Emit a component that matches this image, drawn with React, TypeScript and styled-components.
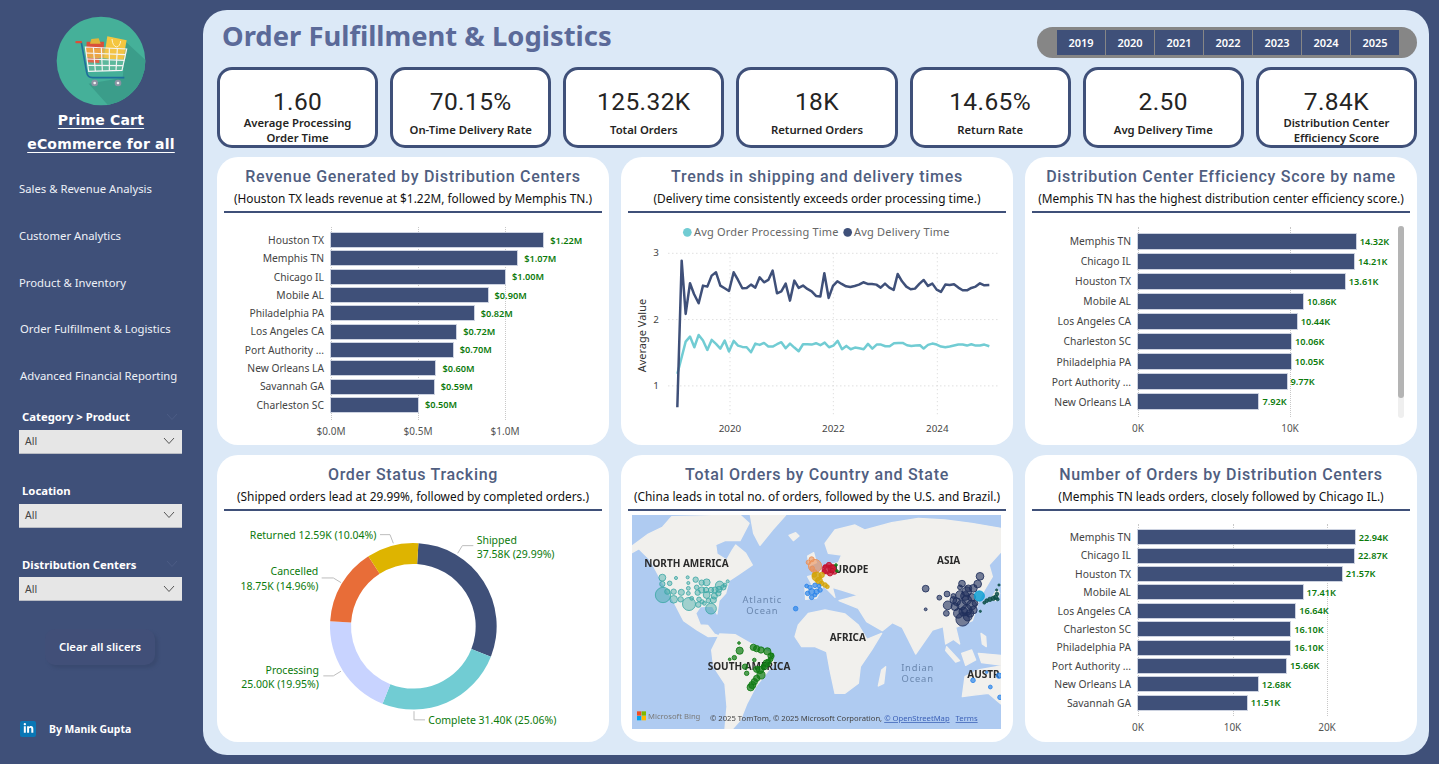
import React from "react";
import styled, { createGlobalStyle } from "styled-components";
import { FaLinkedinIn } from "react-icons/fa";

const NAVY = "#3f5079";
const BODY_FONT = `"Noto Sans", "Open Sans", sans-serif`;
const DIN_FONT = `Roboto, "Noto Sans", sans-serif`;

const GlobalStyle = createGlobalStyle`
  html, body {
    margin: 0;
    padding: 0;
    background: ${NAVY};
    overflow: hidden;
  }
  * {
    box-sizing: border-box;
  }
`;

const Page = styled.div`
  width: 1439px;
  height: 764px;
  display: flex;
  background: ${NAVY};
  font-family: ${BODY_FONT};
  overflow: hidden;
`;

/* sidebar */

const Sidebar = styled.aside`
  width: 203px;
  flex: none;
  padding: 16px 0 0 19px;
  display: flex;
  flex-direction: column;
  color: #fff;
`;

const LogoWrap = styled.div`
  width: 164px;
  display: flex;
  flex-direction: column;
  align-items: center;
`;

const BrandLine = styled.div`
  font-family: "DejaVu Sans", sans-serif;
  font-weight: 700;
  font-size: 14px;
  line-height: 24px;
  letter-spacing: 0.2px;
  color: #fff;
  text-decoration: underline;
  text-decoration-thickness: 1px;
  text-underline-offset: 3px;
  white-space: nowrap;
`;

const Brand = styled.div`
  margin-top: 2px;
  text-align: center;
`;

const NavList = styled.nav`
  margin-top: 9px;
  display: flex;
  flex-direction: column;
`;

const NavItem = styled.div<{ $indent?: number }>`
  height: 46.8px;
  line-height: 47px;
  font-size: 11.3px;
  color: #eef1f7;
  white-space: nowrap;
  padding-left: ${({ $indent }) => $indent ?? 0}px;
`;

const Slicer = styled.div`
  width: 163px;
  height: 73.6px;
  display: flex;
  flex-direction: column;
`;

const SlicerHead = styled.div`
  height: 26px;
  flex: none;
  padding: 0 3px;
  display: flex;
  align-items: center;
  justify-content: space-between;
  font-size: 11.3px;
  font-weight: 700;
  color: #fff;
`;

const SlicerBox = styled.div`
  height: 24px;
  flex: none;
  padding: 0 6px;
  background: #e6e6e6;
  border-bottom: 1px solid #b9bcc4;
  display: flex;
  align-items: center;
  justify-content: space-between;
  font-size: 10.5px;
  color: #444;
`;

const Slicers = styled.div`
  margin-top: 5px;
  display: flex;
  flex-direction: column;
`;

const ClearButton = styled.div`
  width: 110px;
  height: 36px;
  margin: 4px 0 0 26px;
  border-radius: 10px;
  background: #414f78;
  box-shadow: 3px 3px 3px #3a4a70;
  display: flex;
  align-items: center;
  justify-content: center;
  font-size: 11.3px;
  font-weight: 600;
  color: #fff;
`;

const Credit = styled.div`
  margin: 56px 0 0 1px;
  display: flex;
  align-items: center;
  gap: 13px;
  font-size: 10.4px;
  font-weight: 700;
  color: #fff;
`;

const LinkedInBadge = styled.span`
  width: 16px;
  height: 16px;
  border-radius: 2px;
  background: #0a77b5;
  display: flex;
  align-items: center;
  justify-content: center;
  color: #fff;
`;

/* main panel */

const Panel = styled.main`
  width: 1226px;
  height: 745px;
  margin-top: 10px;
  padding: 0 12px 13px 14px;
  border-radius: 24px;
  background: #dce9f7;
  display: flex;
  flex-direction: column;
`;

const Header = styled.header`
  height: 57px;
  display: flex;
  justify-content: space-between;
  padding-left: 5px;
`;

const PageTitle = styled.h1`
  margin: 6px 0 0;
  font-size: 27.4px;
  line-height: 40px;
  font-weight: 700;
  color: #5b6a99;
`;

const YearPill = styled.div`
  width: 380px;
  height: 31px;
  margin-top: 17px;
  border-radius: 16px;
  background: #868686;
  padding: 3px 18px 3px 20px;
  display: flex;
`;

const YearButton = styled.div`
  flex: 1;
  background: ${NAVY};
  border-left: 1px solid #868686;
  display: flex;
  align-items: center;
  justify-content: center;
  font-size: 11px;
  font-weight: 600;
  color: #fff;
  &:first-child {
    border-left: none;
  }
`;

const KpiRow = styled.section`
  height: 81px;
  flex: none;
  display: grid;
  grid-template-columns: repeat(7, 1fr);
  grid-template-rows: 81px;
  gap: 12px;
`;

const KpiCard = styled.div`
  min-height: 0;
  border: 3px solid ${NAVY};
  border-radius: 15px;
  background: #fff;
  display: flex;
  flex-direction: column;
  align-items: center;
  padding-top: 18px;
  color: #252423;
`;

const KpiValue = styled.div`
  flex: none;
  font-family: ${DIN_FONT};
  font-size: 24.5px;
  line-height: 28px;
  letter-spacing: 0.4px;
`;

const KpiLabel = styled.div`
  flex: 1;
  min-height: 0;
  display: flex;
  align-items: center;
  text-align: center;
  padding-bottom: 2px;
  font-size: 11.3px;
  line-height: 15px;
  font-weight: 600;
  white-space: nowrap;
`;

const ChartGrid = styled.section`
  margin-top: 9px;
  flex: 1;
  display: grid;
  grid-template-columns: repeat(3, 1fr);
  grid-template-rows: 288px 287px;
  gap: 10px 12px;
`;

const Card = styled.article`
  background: #fff;
  border-radius: 21px;
  display: flex;
  flex-direction: column;
  min-width: 0;
  overflow: hidden;
`;

const CardTitle = styled.h2`
  margin: 8.5px 0 0;
  text-align: center;
  font-family: ${DIN_FONT};
  font-size: 16px;
  line-height: 22px;
  font-weight: 500;
  letter-spacing: 0.7px;
  color: #505e80;
  white-space: nowrap;
`;

const CardNote = styled.p`
  margin: 2px 7px 0;
  padding-bottom: 4px;
  height: 23px;
  flex: none;
  border-bottom: 2px solid ${NAVY};
  text-align: center;
  font-size: 11.9px;
  line-height: 17px;
  color: #111;
  white-space: nowrap;
`;

/* bar charts */

const BarPlot = styled.div<{ $top: number; $labelWidth: number }>`
  position: relative;
  padding-top: ${({ $top }) => $top}px;
  display: grid;
  grid-template-columns: ${({ $labelWidth }) => $labelWidth}px 1fr;
`;

const BarLabel = styled.div<{ $pitch: number }>`
  height: ${({ $pitch }) => $pitch}px;
  line-height: ${({ $pitch }) => $pitch}px;
  padding-right: 7px;
  text-align: right;
  font-size: 10.3px;
  color: #444;
  white-space: nowrap;
`;

const BarTrack = styled.div<{ $gap: number }>`
  display: flex;
  align-items: center;
  gap: ${({ $gap }) => $gap}px;
  z-index: 1;
`;

const BarFill = styled.div<{ $height: number }>`
  height: ${({ $height }) => $height}px;
  background: ${NAVY};
  box-shadow: 0 0 0 1px #ccd2e0;
`;

const BarValue = styled.span`
  font-size: 9.2px;
  font-weight: 600;
  color: #0b7a0b;
  white-space: nowrap;
`;

const GridLine = styled.div<{ $top: number; $height: number }>`
  position: absolute;
  top: ${({ $top }) => $top}px;
  height: ${({ $height }) => $height}px;
  border-left: 1px dotted #c8c8c8;
`;

const AxisTrack = styled.div`
  position: relative;
  height: 20px;
  grid-column: 2;
`;

const AxisTick = styled.span`
  position: absolute;
  top: 4px;
  transform: translateX(-50%);
  font-size: 10px;
  line-height: 14px;
  color: #555;
  white-space: nowrap;
`;

const Scrollbar = styled.div`
  position: absolute;
  right: 13px;
  top: 13px;
  width: 6px;
  height: 192px;
  border-radius: 3px;
  background: #efefef;
`;

const ScrollThumb = styled.div`
  height: 172px;
  border-radius: 3px;
  background: #b4b4b4;
`;

type BarRow = { name: string; value: number; text: string };

type BarChartProps = {
  rows: BarRow[];
  labelWidth: number;
  pxPerUnit: number;
  pitch: number;
  barHeight: number;
  top: number;
  axisGap: number;
  valueGap: number;
  ticks: { at: number; text: string }[];
  children?: React.ReactNode;
};

const BarChart = ({
  rows,
  labelWidth,
  pxPerUnit,
  pitch,
  barHeight,
  top,
  axisGap,
  valueGap,
  ticks,
  children,
}: BarChartProps) => {
  const plotHeight = rows.length * pitch + axisGap;
  return (
    <BarPlot $top={top} $labelWidth={labelWidth}>
      {ticks.map((t) => (
        <GridLine
          key={t.text}
          $top={top - 4}
          $height={plotHeight + 4}
          style={{ left: labelWidth + t.at * pxPerUnit }}
        />
      ))}
      {rows.map((r) => (
        <React.Fragment key={r.name}>
          <BarLabel $pitch={pitch}>{r.name}</BarLabel>
          <BarTrack $gap={valueGap}>
            <BarFill
              $height={barHeight}
              style={{ width: r.value * pxPerUnit }}
            />
            <BarValue>{r.text}</BarValue>
          </BarTrack>
        </React.Fragment>
      ))}
      <AxisTrack style={{ marginTop: axisGap }}>
        {ticks.map((t) => (
          <AxisTick key={t.text} style={{ left: t.at * pxPerUnit }}>
            {t.text}
          </AxisTick>
        ))}
      </AxisTrack>
      {children}
    </BarPlot>
  );
};

const revenueRows: BarRow[] = [
  { name: "Houston TX", value: 1.22, text: "$1.22M" },
  { name: "Memphis TN", value: 1.07, text: "$1.07M" },
  { name: "Chicago IL", value: 1.0, text: "$1.00M" },
  { name: "Mobile AL", value: 0.9, text: "$0.90M" },
  { name: "Philadelphia PA", value: 0.82, text: "$0.82M" },
  { name: "Los Angeles CA", value: 0.72, text: "$0.72M" },
  { name: "Port Authority ...", value: 0.7, text: "$0.70M" },
  { name: "New Orleans LA", value: 0.6, text: "$0.60M" },
  { name: "Savannah GA", value: 0.59, text: "$0.59M" },
  { name: "Charleston SC", value: 0.5, text: "$0.50M" },
];

const efficiencyRows: BarRow[] = [
  { name: "Memphis TN", value: 14.32, text: "14.32K" },
  { name: "Chicago IL", value: 14.21, text: "14.21K" },
  { name: "Houston TX", value: 13.61, text: "13.61K" },
  { name: "Mobile AL", value: 10.86, text: "10.86K" },
  { name: "Los Angeles CA", value: 10.44, text: "10.44K" },
  { name: "Charleston SC", value: 10.06, text: "10.06K" },
  { name: "Philadelphia PA", value: 10.05, text: "10.05K" },
  { name: "Port Authority ...", value: 9.77, text: "9.77K" },
  { name: "New Orleans LA", value: 7.92, text: "7.92K" },
];

const orderRows: BarRow[] = [
  { name: "Memphis TN", value: 22.94, text: "22.94K" },
  { name: "Chicago IL", value: 22.87, text: "22.87K" },
  { name: "Houston TX", value: 21.57, text: "21.57K" },
  { name: "Mobile AL", value: 17.41, text: "17.41K" },
  { name: "Los Angeles CA", value: 16.64, text: "16.64K" },
  { name: "Charleston SC", value: 16.1, text: "16.10K" },
  { name: "Philadelphia PA", value: 16.1, text: "16.10K" },
  { name: "Port Authority ...", value: 15.66, text: "15.66K" },
  { name: "New Orleans LA", value: 12.68, text: "12.68K" },
  { name: "Savannah GA", value: 11.51, text: "11.51K" },
];

/* svg drawings */

const ChartSvg = styled.svg`
  display: block;
  flex: 1;
  width: 100%;
  min-height: 0;
`;

const LegendText = styled.text`
  font-family: ${BODY_FONT};
  font-size: 33px;
  fill: #666;
  letter-spacing: 0.6px;
`;

const LineAxisText = styled.text`
  font-family: ${BODY_FONT};
  font-size: 29.5px;
  fill: #444;
`;

const AxisTitle = styled.text`
  font-family: ${BODY_FONT};
  font-size: 33px;
  fill: #333;
`;

const delivery =
  "172,740 185,300 197,460 210,368 222,400 236,428 249,375 262,378 275,345 288,335 301,375 314,383 327,391 341,335 354,358 367,383 380,382 393,372 406,381 419,350 432,365 445,358 458,330 471,398 484,392 497,369 510,420 523,360 536,382 549,375 562,385 575,392 588,406 601,408 613,338 626,412 639,376 652,362 665,370 678,377 691,379 704,376 717,372 730,365 743,370 756,370 769,372 782,381 795,369 808,381 821,388 833,340 846,362 859,378 872,386 885,384 898,370 911,358 924,376 937,369 950,387 963,394 976,372 989,373 1002,371 1015,381 1028,389 1041,389 1054,382 1067,378 1080,368 1093,374 1108,373";

const processing =
  "172,640 185,590 197,543 210,528 223,560 236,523 249,540 262,568 275,538 288,550 301,564 314,540 327,573 341,541 354,555 367,559 380,560 393,575 406,549 419,553 432,547 445,558 458,558 471,551 484,545 497,563 510,549 523,561 536,572 549,551 562,551 575,552 588,548 601,554 614,546 627,560 640,555 653,541 666,566 679,556 692,566 705,561 718,563 731,566 744,550 757,564 770,552 783,552 796,557 809,557 822,548 835,547 848,547 861,554 874,556 887,555 900,554 911,564 924,553 937,549 950,552 963,558 976,560 989,558 1002,555 1015,552 1028,552 1041,555 1054,551 1067,555 1080,555 1093,552 1108,557";

const TrendChart = () => (
  <ChartSvg viewBox="3 157 1176 698" preserveAspectRatio="none">
    <circle cx={202} cy={215} r={13} fill="#71ccd3" />
    <LegendText x={222} y={226}>
      Avg Order Processing Time
    </LegendText>
    <circle cx={683} cy={215} r={13} fill={NAVY} />
    <LegendText x={702} y={226}>
      Avg Delivery Time
    </LegendText>
    {[278, 477, 676].map((y) => (
      <line
        key={y}
        x1={145}
        x2={1135}
        y1={y}
        y2={y}
        stroke="#cfcfcf"
        strokeWidth={3}
        strokeDasharray="3 9"
      />
    ))}
    {[330, 640, 952].map((x) => (
      <line
        key={x}
        x1={x}
        x2={x}
        y1={278}
        y2={770}
        stroke="#d6d6d6"
        strokeWidth={3}
        strokeDasharray="3 9"
      />
    ))}
    {[
      ["3", 287],
      ["2", 487],
      ["1", 686],
    ].map(([t, y]) => (
      <LineAxisText key={t} x={108} y={y} textAnchor="middle">
        {t}
      </LineAxisText>
    ))}
    <AxisTitle transform="translate(77 525) rotate(-90)" textAnchor="middle">
      Average Value
    </AxisTitle>
    {[
      ["2020", 330],
      ["2022", 640],
      ["2024", 952],
    ].map(([t, x]) => (
      <LineAxisText key={t} x={x} y={816} textAnchor="middle">
        {t}
      </LineAxisText>
    ))}
    <polyline
      points={processing}
      fill="none"
      stroke="#71ccd3"
      strokeWidth={7.5}
      strokeLinejoin="round"
    />
    <polyline
      points={delivery}
      fill="none"
      stroke={NAVY}
      strokeWidth={7.5}
      strokeLinejoin="round"
    />
  </ChartSvg>
);

const DonutLabel = styled.text`
  font-family: ${BODY_FONT};
  font-size: 31.5px;
  fill: #0b7a0b;
`;

const polar = (cx: number, cy: number, r: number, deg: number) => {
  const a = (deg * Math.PI) / 180;
  return [cx + r * Math.sin(a), cy - r * Math.cos(a)];
};

const donutSlices = [
  { share: 29.99, color: NAVY },
  { share: 25.06, color: "#71ccd3" },
  { share: 19.95, color: "#c8d3ff" },
  { share: 14.96, color: "#e86d38" },
  { share: 10.04, color: "#deb400" },
];

const slicePath = (start: number, end: number) => {
  const [cx, cy, outer, inner] = [595, 377, 250, 187];
  const [x1, y1] = polar(cx, cy, outer, start);
  const [x2, y2] = polar(cx, cy, outer, end);
  const [x3, y3] = polar(cx, cy, inner, end);
  const [x4, y4] = polar(cx, cy, inner, start);
  const large = end - start > 180 ? 1 : 0;
  return `M${x1},${y1} A${outer},${outer} 0 ${large} 1 ${x2},${y2} L${x3},${y3} A${inner},${inner} 0 ${large} 0 ${x4},${y4} Z`;
};

const StatusDonut = () => {
  let angle = 3.5;
  return (
    <ChartSvg viewBox="6 31 1176 695" preserveAspectRatio="none">
      {donutSlices.map((s) => {
        const start = angle;
        angle += s.share * 3.6;
        return <path key={s.color} d={slicePath(start, angle)} fill={s.color} />;
      })}
      {[
        "495,102 525,102 535,128",
        "775,135 742,135 728,158",
        "320,232 355,232 378,246",
        "325,526 355,526 378,512",
        "597,632 597,658 630,658",
      ].map((p) => (
        <polyline key={p} points={p} fill="none" stroke="#bdbdbd" strokeWidth={3} />
      ))}
      <DonutLabel x={484} y={116} textAnchor="end">
        Returned 12.59K (10.04%)
      </DonutLabel>
      <DonutLabel x={310} y={224} textAnchor="end">
        Cancelled
      </DonutLabel>
      <DonutLabel x={310} y={267} textAnchor="end">
        18.75K (14.96%)
      </DonutLabel>
      <DonutLabel x={785} y={129} textAnchor="start">
        Shipped
      </DonutLabel>
      <DonutLabel x={785} y={171} textAnchor="start">
        37.58K (29.99%)
      </DonutLabel>
      <DonutLabel x={312} y={519} textAnchor="end">
        Processing
      </DonutLabel>
      <DonutLabel x={312} y={561} textAnchor="end">
        25.00K (19.95%)
      </DonutLabel>
      <DonutLabel x={640} y={671} textAnchor="start">
        Complete 31.40K (25.06%)
      </DonutLabel>
    </ChartSvg>
  );
};

const MapFrame = styled.div`
  width: 369px;
  height: 214px;
  margin: 4.5px 0 0 11px;
  overflow: hidden;
`;

const MapSvg = styled.svg`
  display: block;
  width: 100%;
  height: 100%;
  filter: blur(0.35px);
`;

const RegionName = styled.text`
  font-family: ${BODY_FONT};
  font-size: 30px;
  font-weight: 700;
  fill: #2a2a2a;
`;

const OceanName = styled.text`
  font-family: ${BODY_FONT};
  font-size: 28px;
  letter-spacing: 2.5px;
  fill: #6a87ae;
`;

const BingMark = styled.text`
  font-family: ${BODY_FONT};
  font-size: 23px;
  fill: #7a7a7a;
`;

const Attribution = styled.text`
  font-family: ${BODY_FONT};
  font-size: 23px;
  fill: #444;
`;

const AttributionLink = styled.tspan`
  fill: #3d62b8;
  text-decoration: underline;
`;

const land = [
  "M21,108 L70,72 L112,52 L140,20 L345,15 L372,40 L345,92 L300,92 L272,104 L276,132 L305,150 L322,120 L332,105 L362,130 L382,165 L345,190 L312,212 L302,250 L282,272 L276,312 L262,288 L226,290 L212,310 L226,345 L248,346 L268,372 L284,378 L250,380 L216,360 L176,332 L150,282 L126,240 L100,195 L76,150 L42,116 L21,128 Z",
  "M376,15 L482,15 L442,60 L405,106 L386,70 Z",
  "M492,76 L512,68 L522,78 L505,92 Z",
  "M284,372 L330,374 L376,400 L440,430 L446,460 L416,500 L392,530 L366,580 L346,630 L322,657 L300,657 L306,590 L300,522 L266,470 L260,420 Z",
  "M520,345 L550,310 L600,300 L660,312 L700,345 L726,388 L770,370 L740,420 L706,470 L700,520 L660,550 L630,550 L615,480 L605,425 L570,410 L530,410 L510,380 Z",
  "M540,232 L560,222 L548,200 L580,190 L600,168 L640,158 L650,135 L610,130 L600,100 L630,60 L690,45 L720,60 L800,38 L880,25 L960,30 L1040,40 L1128,55 L1128,125 L1092,165 L1102,200 L1078,240 L1062,270 L1042,332 L992,352 L1004,402 L985,388 L962,402 L955,350 L922,360 L872,432 L832,352 L802,338 L772,362 L725,335 L700,295 L642,272 L700,256 L650,240 L622,232 L630,262 L595,226 L575,264 L542,268 Z",
  "M548,138 L566,128 L574,158 L552,168 Z",
  "M1098,268 L1116,238 L1124,250 L1112,272 Z",
  "M1010,430 L1040,420 L1052,450 L1022,466 Z",
  "M965,410 L1004,452 L992,456 L962,422 Z",
  "M1068,370 L1082,380 L1084,410 L1072,402 Z",
  "M1060,430 L1128,436 L1128,465 L1070,458 Z",
  "M770,480 L782,470 L776,520 L760,528 Z",
  "M1020,500 L1060,480 L1128,468 L1128,582 L1090,550 L1040,556 L1012,560 Z",
];

type Bubble = [number, number, number];

const bubbleGroups: { color: string; opacity: number; scale: number; dots: Bubble[] }[] = [
  {
    color: "#3fa8a6",
    opacity: 0.45,
    scale: 1.15,
    dots: [[112,203,9],[112,222,7],[153,204,4],[188,202,4],[134,220,6],[190,219,4],[212,209,7],[230,218,7],[245,217,9],[308,214,4],[284,226,11],[215,232,6],[190,235,5],[114,255,20],[127,245,7],[146,245,7],[169,247,8],[190,250,5],[230,240,8],[243,240,7],[258,240,7],[270,240,8],[282,238,8],[295,232,7],[300,225,5],[146,268,10],[167,268,7],[192,282,17],[200,265,5],[218,248,7],[222,268,6],[245,255,9],[268,258,8],[280,250,7],[258,296,14],[220,284,7],[238,280,5],[265,270,8],[250,272,6],[232,275,5]],
  },
  {
    color: "#1f2f5c",
    opacity: 0.6,
    scale: 1.45,
    dots: [[1065,199,8],[1058,222,8],[1011,221,7],[1045,235,8],[902,236,7],[943,263,5],[902,298,3],[966,252,6],[968,286,9],[964,310,6],[1013,328,14],[1025,245,10],[1005,255,9],[985,270,7],[990,290,8],[1025,270,10],[1040,262,8],[1010,285,10],[1040,285,10],[1025,300,11],[1000,310,10],[1050,280,6],[1045,300,8],[1028,320,9],[1015,305,9],[985,258,5],[1005,232,5],[1020,258,9],[995,275,8],[1035,310,8],[1030,235,7]],
  },
  {
    color: "#0f9fd4",
    opacity: 0.85,
    scale: 1.1,
    dots: [[1063,258,14]],
  },
  {
    color: "#0d4f48",
    opacity: 0.85,
    scale: 1.1,
    dots: [[1122,225,3],[1115,240,3],[1116,252,5],[1112,262,6],[1105,265,6],[1095,268,6],[1085,272,5],[1078,278,4],[1066,304,3],[1118,268,4]],
  },
  {
    color: "#0e7a12",
    opacity: 0.7,
    scale: 1.35,
    dots: [[342,399,3],[344,422,8],[314,448,3],[328,443,5],[388,450,4],[385,412,7],[395,416,7],[408,420,7],[427,424,8],[438,438,7],[437,448,5],[425,460,8],[418,470,7],[405,480,8],[360,470,6],[365,490,5],[395,478,7],[408,495,9],[395,505,7],[388,515,7],[382,525,8],[377,532,8],[415,470,5],[430,455,6],[440,435,4]],
  },
  {
    color: "#ec8f55",
    opacity: 0.6,
    scale: 1.1,
    dots: [[570,168,18],[560,148,7],[550,157,6],[562,175,6],[570,185,5]],
  },
  {
    color: "#c4122f",
    opacity: 0.75,
    scale: 1.15,
    dots: [[605,178,12],[620,175,10],[612,165,7],[628,185,7],[598,185,6],[615,190,7],[625,170,5],[600,170,5]],
  },
  {
    color: "#0e7a12",
    opacity: 0.8,
    scale: 1,
    dots: [[633,165,4],[636,183,4]],
  },
  {
    color: "#d2a40a",
    opacity: 0.8,
    scale: 1.15,
    dots: [[575,200,12],[590,195,7],[568,195,6],[582,212,9],[590,220,6],[600,225,6],[607,230,5]],
  },
  {
    color: "#2d86ea",
    opacity: 0.7,
    scale: 1.15,
    dots: [[545,228,5],[555,232,6],[570,226,6],[582,228,5],[560,245,8],[575,245,7],[585,240,6],[548,250,6],[560,262,6],[570,255,5],[512,296,6],[1044,511,6],[1096,531,5],[1125,562,6],[1122,497,7],[1085,487,3]],
  },
];

const OrdersMap = () => (
  <MapFrame>
    <MapSvg viewBox="21 15 1107 642">
      <rect x={21} y={15} width={1107} height={642} fill="#afcbf1" />
      {land.map((d) => (
        <path key={d} d={d} fill="#f1f0ed" stroke="#f1f0ed" strokeWidth={4} strokeLinejoin="round" />
      ))}
      <RegionName x={58} y={172}>NORTH AMERICA</RegionName>
      <RegionName x={612} y={190}>EUROPE</RegionName>
      <RegionName x={936} y={162}>ASIA</RegionName>
      <RegionName x={614} y={394}>AFRICA</RegionName>
      <RegionName x={248} y={481}>SOUTH AMERICA</RegionName>
      <RegionName x={1027} y={503}>AUSTR</RegionName>
      <OceanName x={412} y={278} textAnchor="middle">Atlantic</OceanName>
      <OceanName x={412} y={311} textAnchor="middle">Ocean</OceanName>
      <OceanName x={878} y={484} textAnchor="middle">Indian</OceanName>
      <OceanName x={878} y={517} textAnchor="middle">Ocean</OceanName>
      {bubbleGroups.map((g) =>
        g.dots.map(([x, y, r]) => (
          <circle
            key={`${g.color}-${x}-${y}`}
            cx={x}
            cy={y}
            r={r * g.scale}
            fill={g.color}
            fillOpacity={g.opacity}
            stroke={g.color}
            strokeWidth={2.5}
          />
        )),
      )}
      <rect x={36} y={604} width={13} height={13} fill="#f25022" />
      <rect x={50} y={604} width={13} height={13} fill="#7fba00" />
      <rect x={36} y={618} width={13} height={13} fill="#00a4ef" />
      <rect x={50} y={618} width={13} height={13} fill="#ffb900" />
      <BingMark x={69} y={626}>Microsoft Bing</BingMark>
      <Attribution x={255} y={633}>
        © 2025 TomTom, © 2025 Microsoft Corporation,{" "}
        <AttributionLink>© OpenStreetMap</AttributionLink>
        <AttributionLink dx={18}>Terms</AttributionLink>
      </Attribution>
    </MapSvg>
  </MapFrame>
);

const LogoSvg = styled.svg`
  display: block;
  width: 90px;
  height: 90px;
`;

const Logo = () => (
  <LogoSvg viewBox="170 47 270 270">
    <defs>
      <clipPath id="logoCircle">
        <circle cx={305} cy={182} r={133} />
      </clipPath>
    </defs>
    <circle cx={305} cy={182} r={133} fill="#45b099" />
    <polygon
      points="380,125 450,190 450,330 340,330 268,250 370,232"
      fill="#3b9d8a"
      clipPath="url(#logoCircle)"
    />
    <polygon points="262,124 314,124 312,172 260,170" fill="#d9503a" />
    <polygon points="276,116 298,114 304,130 272,130" fill="#e0b53a" />
    <polygon points="324,108 382,120 370,182 314,172" fill="#f4c63f" />
    <path d="M338,116 Q340,138 352,140 Q362,138 364,122" fill="none" stroke="#fff3c8" strokeWidth={3} />
    <polygon points="258,142 382,148 377,178 262,172" fill="#f1c24a" fillOpacity={0.75} />
    <polygon points="262,172 376,178 368,210 268,213" fill="#5db89c" />
    <polygon points="262,172 300,174 300,188 264,186" fill="#e0654a" />
    <g stroke="#f4f4f4" strokeWidth={3.5} fill="none">
      <polygon points="258,140 382,146 368,210 268,213" />
      <line x1={260} y1={158} x2={378} y2={163} />
      <line x1={263} y1={176} x2={375} y2={180} />
      <line x1={266} y1={195} x2={371} y2={196} />
      <line x1={282} y1={141} x2={288} y2={212} />
      <line x1={306} y1={142} x2={309} y2={212} />
      <line x1={330} y1={143} x2={330} y2={211} />
      <line x1={354} y1={145} x2={350} y2={211} />
    </g>
    <path d="M246,126 L262,215 Q264,232 280,232 L375,232" fill="none" stroke="#1f6f9c" strokeWidth={5} />
    <rect x={228} y={122} width={20} height={7} rx={3} fill="#d9503a" />
    <circle cx={286} cy={248} r={10} fill="#8b93a3" />
    <circle cx={286} cy={248} r={4} fill="#f1f1f1" />
    <circle cx={356} cy={248} r={10} fill="#8b93a3" />
    <circle cx={356} cy={248} r={4} fill="#f1f1f1" />
  </LogoSvg>
);

const ChevronSvg = styled.svg<{ $faint?: boolean }>`
  display: block;
  width: 14px;
  height: 8px;
  stroke: ${({ $faint }) => ($faint ? "#4c5c85" : "#555")};
  fill: none;
  stroke-width: 1;
`;

const Chevron = ({ faint }: { faint?: boolean }) => (
  <ChevronSvg viewBox="0 0 14 8" $faint={faint}>
    <path d="M2,1 L7,6.5 L12,1" />
  </ChevronSvg>
);

const navItems = [
  { text: "Sales & Revenue Analysis", indent: 0 },
  { text: "Customer Analytics", indent: 0 },
  { text: "Product & Inventory", indent: 0 },
  { text: "Order Fulfillment & Logistics", indent: 1 },
  { text: "Advanced Financial Reporting", indent: 1 },
];

const slicers = [
  { label: "Category > Product", faint: true },
  { label: "Location", faint: false },
  { label: "Distribution Centers", faint: true },
];

const years = ["2019", "2020", "2021", "2022", "2023", "2024", "2025"];

const kpis = [
  { value: "1.60", lines: ["Average Processing", "Order Time"] },
  { value: "70.15%", lines: ["On-Time Delivery Rate"] },
  { value: "125.32K", lines: ["Total Orders"] },
  { value: "18K", lines: ["Returned Orders"] },
  { value: "14.65%", lines: ["Return Rate"] },
  { value: "2.50", lines: ["Avg Delivery Time"] },
  { value: "7.84K", lines: ["Distribution Center", "Efficiency Score"] },
];

export default function App() {
  return (
    <Page>
      <GlobalStyle />
      <Sidebar>
        <LogoWrap>
          <Logo />
          <Brand>
            <BrandLine>Prime Cart</BrandLine>
            <BrandLine>eCommerce for all</BrandLine>
          </Brand>
        </LogoWrap>
        <NavList>
          {navItems.map((n) => (
            <NavItem key={n.text} $indent={n.indent}>
              {n.text}
            </NavItem>
          ))}
        </NavList>
        <Slicers>
          {slicers.map((s) => (
            <Slicer key={s.label}>
              <SlicerHead>
                {s.label}
                {s.faint && <Chevron faint />}
              </SlicerHead>
              <SlicerBox>
                All
                <Chevron />
              </SlicerBox>
            </Slicer>
          ))}
        </Slicers>
        <ClearButton>Clear all slicers</ClearButton>
        <Credit>
          <LinkedInBadge>
            <FaLinkedinIn size={11} />
          </LinkedInBadge>
          By Manik Gupta
        </Credit>
      </Sidebar>
      <Panel>
        <Header>
          <PageTitle>Order Fulfillment &amp; Logistics</PageTitle>
          <YearPill>
            {years.map((y) => (
              <YearButton key={y}>{y}</YearButton>
            ))}
          </YearPill>
        </Header>
        <KpiRow>
          {kpis.map((k) => (
            <KpiCard key={k.value}>
              <KpiValue>{k.value}</KpiValue>
              <KpiLabel>
                <span>
                  {k.lines.map((l) => (
                    <React.Fragment key={l}>
                      {l}
                      <br />
                    </React.Fragment>
                  ))}
                </span>
              </KpiLabel>
            </KpiCard>
          ))}
        </KpiRow>
        <ChartGrid>
          <Card>
            <CardTitle>Revenue Generated by Distribution Centers</CardTitle>
            <CardNote>(Houston TX leads revenue at $1.22M, followed by Memphis TN.)</CardNote>
            <BarChart
              rows={revenueRows}
              labelWidth={114}
              pxPerUnit={174}
              pitch={18.3}
              barHeight={14}
              top={18.5}
              axisGap={6}
              valueGap={7}
              ticks={[
                { at: 0, text: "$0.0M" },
                { at: 0.5, text: "$0.5M" },
                { at: 1, text: "$1.0M" },
              ]}
            />
          </Card>
          <Card>
            <CardTitle>Trends in shipping and delivery times</CardTitle>
            <CardNote>(Delivery time consistently exceeds order processing time.)</CardNote>
            <TrendChart />
          </Card>
          <Card>
            <CardTitle>Distribution Center Efficiency Score by name</CardTitle>
            <CardNote>(Memphis TN has the highest distribution center efficiency score.)</CardNote>
            <BarChart
              rows={efficiencyRows}
              labelWidth={113}
              pxPerUnit={15.2}
              pitch={20.1}
              barHeight={15}
              top={18.5}
              axisGap={5}
              valueGap={4}
              ticks={[
                { at: 0, text: "0K" },
                { at: 10, text: "10K" },
              ]}
            >
              <Scrollbar>
                <ScrollThumb />
              </Scrollbar>
            </BarChart>
          </Card>
          <Card>
            <CardTitle>Order Status Tracking</CardTitle>
            <CardNote>(Shipped orders lead at 29.99%, followed by completed orders.)</CardNote>
            <StatusDonut />
          </Card>
          <Card>
            <CardTitle>Total Orders by Country and State</CardTitle>
            <CardNote>(China leads in total no. of orders, followed by the U.S. and Brazil.)</CardNote>
            <OrdersMap />
          </Card>
          <Card>
            <CardTitle>Number of Orders by Distribution Centers</CardTitle>
            <CardNote>(Memphis TN leads orders, closely followed by Chicago IL.)</CardNote>
            <BarChart
              rows={orderRows}
              labelWidth={113}
              pxPerUnit={9.45}
              pitch={18.4}
              barHeight={14}
              top={17.5}
              axisGap={4}
              valueGap={4}
              ticks={[
                { at: 0, text: "0K" },
                { at: 10, text: "10K" },
                { at: 20, text: "20K" },
              ]}
            />
          </Card>
        </ChartGrid>
      </Panel>
    </Page>
  );
}
